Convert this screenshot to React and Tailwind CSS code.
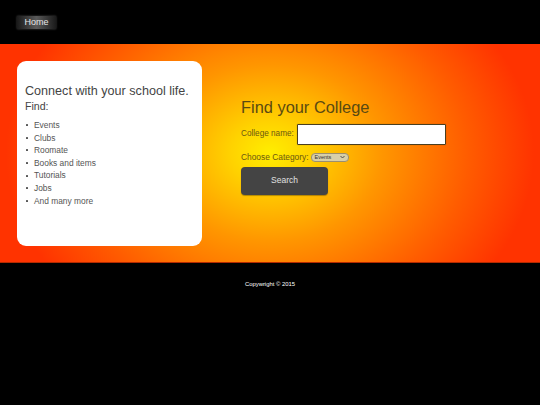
export default function App() {
  const items = ["Events", "Clubs", "Roomate", "Books and items", "Tutorials", "Jobs", "And many more"];
  return (
    <div className="w-[540px] h-[405px] bg-black font-['Liberation_Sans',Arial,sans-serif] overflow-hidden">
      <header className="h-[44px] pl-[17px] pt-[16px]">
        <button className="h-[13px] w-[39px] flex items-center justify-center text-[9px] leading-none text-[#e6e6e6] bg-[linear-gradient(to_right,#1a1a1a,#5a5a5a_50%,#1a1a1a)] shadow-[0_0_2px_rgba(120,120,120,0.6)]">
          Home
        </button>
      </header>
      <main className="h-[219px] border-b border-[#b32a00] bg-[radial-gradient(330px_260px_at_50%_50%,#ffee00_0%,#ffd200_12%,#ff9600_34%,#ff5c00_60%,#ff3300_80%)] flex pl-[17px] pt-[17px]">
        <div className="w-[185px] h-[185px] bg-white rounded-[9px] pl-[8px] pt-[22px]">
          <h2 className="text-[12.6px] leading-[16px] text-[#444]">Connect with your school life.</h2>
          <p className="text-[10.6px] leading-[13px] text-[#444] mt-[1px]">Find:</p>
          <ul className="mt-[6px] text-[8.4px] leading-[12.6px] text-[#555]">
            {items.map((t) => (
              <li key={t} className="flex items-center">
                <span className="ml-[1px] w-[2px] h-[2px] bg-[#555] rounded-[0.5px]" />
                <span className="ml-[6px]">{t}</span>
              </li>
            ))}
          </ul>
        </div>
        <div className="ml-[39px] pt-[36px]">
          <h1 className="text-[16.4px] leading-[20px] text-[#5a4a12]">Find your College</h1>
          <div className="flex items-center mt-[7px]">
            <span className="text-[8.2px] text-[#6b5810]">College name:</span>
            <input className="ml-[3px] w-[149px] h-[21px] bg-white border border-[#4a3f20] rounded-[1px] shadow-[0_0_1px_rgba(0,0,0,0.4)] outline-none" />
          </div>
          <div className="flex items-center mt-[6px]">
            <span className="text-[8.4px] text-[#6b5810]">Choose Category:</span>
            <div className="ml-[2px] w-[38px] h-[9px] rounded-[4px] bg-[#d8cfa8] border border-[#9a8f70] flex items-center justify-between px-[3px]">
              <span className="text-[5.5px] leading-none text-[#333]">Events</span>
              <svg width="5" height="4" viewBox="0 0 5 4"><path d="M0.5 1 L2.5 3 L4.5 1" stroke="#444" strokeWidth="0.9" fill="none" /></svg>
            </div>
          </div>
          <button className="mt-[3px] w-[87px] h-[28px] bg-[#444] rounded-[4px] text-[8.5px] text-[#e0e0e0] shadow-[0_1px_1px_rgba(0,0,0,0.3)]">
            Search
          </button>
        </div>
      </main>
      <footer className="pt-[17px] text-center text-[5.9px] text-white">Copywright © 2015</footer>
    </div>
  );
}
